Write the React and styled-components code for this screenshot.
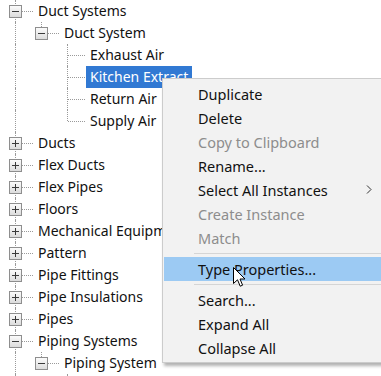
import React from 'react'
import styled, { createGlobalStyle } from 'styled-components'

const GlobalStyle = createGlobalStyle`
  html, body {
    margin: 0;
    padding: 0;
    background: #ffffff;
    overflow: hidden;
  }
  body {
    font-family: "Noto Sans", "Open Sans", sans-serif;
    width: 381px;
    height: 376px;
  }
`

const rows = [
  { label: 'Duct Systems', guides: [], toggle: 'minus' },
  { label: 'Duct System', guides: [true], toggle: 'minus', last: true },
  { label: 'Exhaust Air', guides: [true, false] },
  { label: 'Kitchen Extract', guides: [true, false], selected: true },
  { label: 'Return Air', guides: [true, false] },
  { label: 'Supply Air', guides: [true, false], last: true },
  { label: 'Ducts', guides: [], toggle: 'plus' },
  { label: 'Flex Ducts', guides: [], toggle: 'plus' },
  { label: 'Flex Pipes', guides: [], toggle: 'plus' },
  { label: 'Floors', guides: [], toggle: 'plus' },
  { label: 'Mechanical Equipment', guides: [], toggle: 'plus' },
  { label: 'Pattern', guides: [], toggle: 'plus' },
  { label: 'Pipe Fittings', guides: [], toggle: 'plus' },
  { label: 'Pipe Insulations', guides: [], toggle: 'plus' },
  { label: 'Pipes', guides: [], toggle: 'plus' },
  { label: 'Piping Systems', guides: [], toggle: 'minus' },
  { label: 'Piping System', guides: [true], toggle: 'minus', last: true },
  // next child is scrolled below the window; only its guide line peeks in
  { label: '', guides: [true, false] },
]

const menu = [
  { label: 'Duplicate' },
  { label: 'Delete' },
  { label: 'Copy to Clipboard', disabled: true },
  { label: 'Rename...' },
  { label: 'Select All Instances', sub: true },
  { label: 'Create Instance', disabled: true },
  { label: 'Match', disabled: true },
  { sep: true },
  { label: 'Type Properties...', hot: true },
  { sep: true },
  { label: 'Search...' },
  { label: 'Expand All' },
  { label: 'Collapse All' },
]

const Page = styled.div`
  position: relative;
  width: 381px;
  height: 376px;
  overflow: hidden;
`

const Tree = styled.div`
  display: flex;
  flex-direction: column;
  padding-left: 2px;
`

const Row = styled.div`
  display: flex;
  align-items: center;
  height: 22px;
  flex-shrink: 0;
`

const Guide = styled.span`
  position: relative;
  width: 26px;
  height: 22px;
  flex-shrink: 0;
  &::before {
    content: '';
    display: ${(p) => (p.$line ? 'block' : 'none')};
    position: absolute;
    left: 13px;
    top: 0;
    height: 22px;
    border-left: 1px dotted #9a9a9a;
  }
`

const Connector = styled.span`
  position: relative;
  width: 32px;
  height: 22px;
  flex-shrink: 0;
  &::before {
    content: '';
    position: absolute;
    left: 13px;
    top: 0;
    height: ${(p) => (p.$last ? '11px' : '22px')};
    border-left: 1px dotted #9a9a9a;
  }
  &::after {
    content: '';
    position: absolute;
    left: 14px;
    top: 11px;
    width: 17px;
    border-top: 1px dotted #9a9a9a;
  }
`

const Toggle = styled.span`
  position: absolute;
  z-index: 1;
  left: 7px;
  top: 5px;
  width: 11px;
  height: 11px;
  border: 1px solid #8e8e8e;
  background: linear-gradient(#fbfbfb, #dcdcdc);
  &::before {
    content: '';
    position: absolute;
    left: 2px;
    top: 5px;
    width: 7px;
    height: 1px;
    background: #3a3a3a;
  }
  &::after {
    content: '';
    display: ${(p) => (p.$open ? 'none' : 'block')};
    position: absolute;
    left: 5px;
    top: 2px;
    width: 1px;
    height: 7px;
    background: #3a3a3a;
  }
`

const Label = styled.span`
  height: 22px;
  line-height: 21px;
  padding: 0 4px;
  font-size: 14px;
  white-space: nowrap;
  color: ${(p) => (p.$selected ? '#ffffff' : '#111111')};
  background: ${(p) => (p.$selected ? '#3179d3' : 'transparent')};
`

const Menu = styled.div`
  position: absolute;
  left: 162px;
  top: 78px;
  width: 234px;
  padding: 3px 1px 2px;
  background: #f2f2f2;
  border: 1px solid #cccccc;
  box-shadow: 2px 3px 3px rgba(0, 0, 0, 0.3);
  display: flex;
  flex-direction: column;
`

const Item = styled.div`
  position: relative;
  display: flex;
  align-items: center;
  height: 24px;
  padding-left: 34px;
  padding-bottom: 1px;
  box-sizing: border-box;
  font-size: 14.5px;
  white-space: nowrap;
  color: ${(p) => (p.$disabled ? '#8d8d8d' : '#111111')};
  background: ${(p) => (p.$hot ? '#9ccaf3' : 'transparent')};
`

const Separator = styled.div`
  height: 7px;
  display: flex;
  align-items: center;
  padding-left: 30px;
  &::after {
    content: '';
    flex: 1;
    height: 1px;
    background: #d5d5d5;
  }
`

const Chevron = styled.svg`
  position: absolute;
  left: 202px;
  top: 7px;
`

const Cursor = styled.svg`
  position: absolute;
  left: 233px;
  top: 267px;
`

export default function App() {
  return (
    <Page>
      <GlobalStyle />
      <Tree>
        {rows.map((r, i) => (
          <Row key={i}>
            {r.guides.map((g, j) => (
              <Guide key={j} $line={g} />
            ))}
            <Connector $last={r.last}>
              {r.toggle && <Toggle $open={r.toggle === 'minus'} />}
            </Connector>
            {r.label && <Label $selected={r.selected}>{r.label}</Label>}
          </Row>
        ))}
      </Tree>
      <Menu>
        {menu.map((m, i) =>
          m.sep ? (
            <Separator key={i} />
          ) : (
            <Item key={i} $disabled={m.disabled} $hot={m.hot}>
              {m.label}
              {m.sub && (
                <Chevron width="6" height="9" viewBox="0 0 6 9">
                  <path d="M1 0.5 L5 4.5 L1 8.5" fill="none" stroke="#333" strokeWidth="1" />
                </Chevron>
              )}
            </Item>
          )
        )}
      </Menu>
      <Cursor width="13" height="21" viewBox="0 0 13 21">
        <path
          d="M0.5 0.5 L0.5 16.5 L4.5 12.8 L7.2 19.2 L9.6 18.2 L7 12 L12 12 Z"
          fill="#ffffff"
          stroke="#000000"
          strokeWidth="1"
          strokeLinejoin="round"
        />
      </Cursor>
    </Page>
  )
}
